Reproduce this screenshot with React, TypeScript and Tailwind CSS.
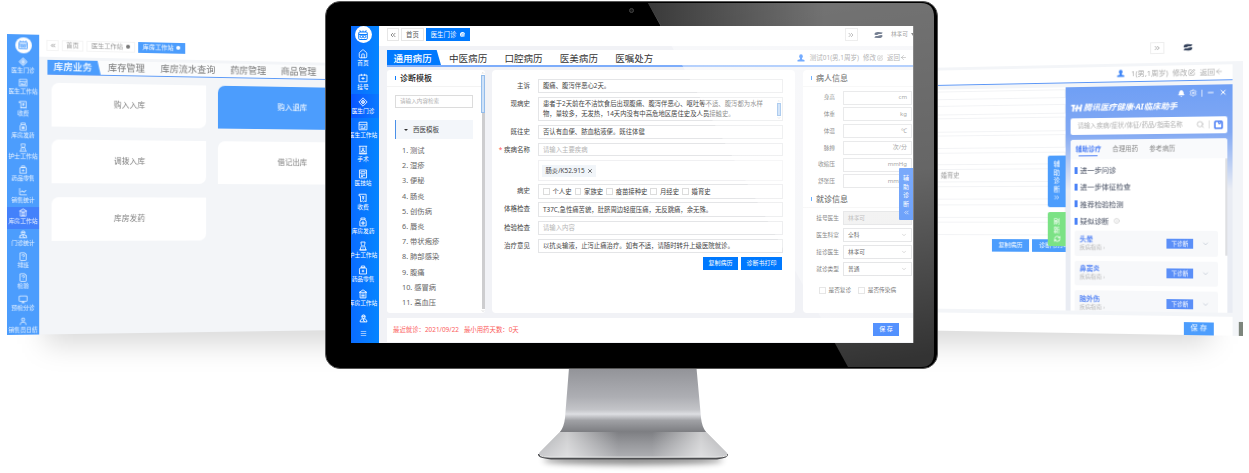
import React from "react";
import {
  ArrowLeft, BellIcon, ChevronDown, ChevronsLeft, ChevronsRight,
  ChevronUp, CircleX, FileQuestion, Home, Info,
  LineChart, Menu, Minus, Monitor, RefreshCw, Save, Search, Settings, SquarePen, User,
  X,
} from "lucide-react";

type Icon = React.ComponentType<{ className?: string; strokeWidth?: number }>;
type NavItem = { icon: Icon; label: string; active?: boolean };

const glyph = (children: React.ReactNode): Icon =>
  ({ className, strokeWidth = 2 }) => (
    <svg viewBox="0 0 24 24" className={className} fill="none" stroke="currentColor" strokeWidth={strokeWidth} strokeLinejoin="round">
      {children}
    </svg>
  );

const Robot = glyph(
  <>
    <path d="M8 6 5.500 2.500M16 6l2.500-3.500M12 6V3" />
    <rect x="3.500" y="6" width="17" height="15" rx="2" />
    <path d="M3.500 11h17" />
    <circle cx="9" cy="15" r="2.500" />
    <circle cx="15" cy="15" r="2.500" />
  </>,
);
const Register = glyph(<><rect x="2.500" y="5" width="19" height="16" /><path d="M8 2v5M16 2v5M8 13h8M12 9.500v7" /></>);
const DoubleDiamond = glyph(<><path d="M12 2 22 12 12 22 2 12Z" /><path d="M12 7 17 12 12 17 7 12Z" /><circle cx="12" cy="12" r="1.500" fill="currentColor" /></>);
const Workstation = glyph(<><rect x="2.500" y="3" width="19" height="18" /><path d="M2.500 9h19M6 14h6M6 17.500h12M15 12l3 2-3 2" /></>);
const Surgery = glyph(<><path d="M2 3h20M4.500 3v18h15V3M2 21h20" /><circle cx="12" cy="9" r="2" /><path d="M8 17v-2.500l4-2 4 2V17Z" /></>);
const Lab = glyph(<><rect x="3.500" y="2.500" width="17" height="19" /><path d="M7 6.500h10v5H7ZM7 15h10M7 18h5" /></>);
const Receipt = glyph(<><path d="M6 21V7H2.500V3h17v18l-3-2-3 2-3-2ZM10 7l2.500 3L15 7M12.500 10v6M10 12h5" /></>);
const Bottle = glyph(<><path d="M7 2.500h10v4H7ZM7 6.500 4.500 10v11.500h15V10L17 6.500" /><circle cx="12" cy="14.500" r="3" /><path d="M12 13v3M10.500 14.500h3" /></>);
const Nurse = glyph(<><path d="M7 2.500h10l-1 6a4 4 0 0 1-8 0ZM8 12 5 21.500h14L16 12M3 21.500h18M12 15v3" /></>);
const Kit = glyph(<><path d="M8 2.500h8v4H8ZM5 7h14l1.500 3v11.500h-17V10ZM12 11.500v6M9 14.500h6" /></>);
const House = glyph(<><path d="M12 2 3 8h18ZM5 8v13.500h14V8M8 12h8M8 15.500h8M8 19h8" /></>);
const Doctor = glyph(<><circle cx="12" cy="7" r="4.500" /><path d="M7.500 6h9M3 21c0-5 3-8 6-8h6c3 0 6 3 6 8ZM12 14v4l4 2" /></>);

const Swirl = ({ className }: { className?: string }) => (
  <svg viewBox="0 0 24 20" className={className} fill="currentColor">
    <path d="M1 8C2 3 7 1 12 2l11 1c-1 3-3 4.500-6 4.500-3 0-5-.5-6 1C7 10.500 2 11 1 8Z" />
    <path d="M23 12c-1 5-6 7-11 6L1 17c1-3 3-4.500 6-4.500 3 0 5 .5 6-1 4-2 9-2.500 10 .5Z" />
  </svg>
);

const PersonSolid = ({ className }: { className?: string }) => (
  <svg viewBox="0 0 16 16" className={className} fill="currentColor">
    <ellipse cx="8" cy="5" rx="3.600" ry="4.300" />
    <path d="M6 8h4v2.500l5 1.500v3H1v-3l5-1.500Z" />
  </svg>
);

const mainNav: NavItem[] = [
  { icon: Home, label: "首页" },
  { icon: Register, label: "挂号" },
  { icon: DoubleDiamond, label: "医生门诊", active: true },
  { icon: Workstation, label: "医生工作站" },
  { icon: Surgery, label: "手术" },
  { icon: Lab, label: "医技站" },
  { icon: Receipt, label: "收费" },
  { icon: Bottle, label: "库房发药" },
  { icon: Nurse, label: "护士工作站" },
  { icon: Kit, label: "药品零售" },
  { icon: House, label: "库房工作站" },
];

const stockNav: NavItem[] = [
  { icon: DoubleDiamond, label: "医生门诊" },
  { icon: Workstation, label: "医生工作站" },
  { icon: Receipt, label: "收费" },
  { icon: Bottle, label: "库房发药" },
  { icon: Nurse, label: "护士工作站" },
  { icon: Kit, label: "药品零售" },
  { icon: LineChart, label: "销售统计" },
  { icon: House, label: "库房工作站", active: true },
  { icon: Doctor, label: "门诊统计" },
  { icon: FileQuestion, label: "排班" },
  { icon: FileQuestion, label: "检验" },
  { icon: Monitor, label: "预检分诊" },
  { icon: User, label: "销售员日结" },
];

function StockWindow() {
  return (
    <div className="absolute left-[7px] top-[34px] flex h-[301px] w-[322px] origin-top-left overflow-hidden bg-[#f3f5f8] [transform:matrix3d(1.042,0.0247,0,0.000132,0,1,0,0,0,0,1,0,0,0,0,1)]">
      <nav className="flex w-[31px] shrink-0 flex-col items-center bg-[#4c9dfd] pt-[2.500px] text-white">
        <div className="flex size-[16px] shrink-0 items-center justify-center rounded-full bg-white">
          <Robot className="size-[11px] text-[#4c9dfd]" />
        </div>
        <div className="mt-[3px] flex w-full flex-col">
          {stockNav.map(({ icon: I, label, active }) => (
            <div key={label} className={`flex h-[21.700px] w-full flex-col items-center pt-px ${active ? "bg-[#4381fb]" : ""}`}>
              <I className="size-[9px] shrink-0 opacity-90" strokeWidth={2} />
              <span className="whitespace-nowrap text-[5.600px] leading-[8px] opacity-90">{label}</span>
            </div>
          ))}
        </div>
      </nav>
      <div className="flex min-w-0 flex-1 flex-col">
        <header className="flex h-[22px] shrink-0 items-center gap-[3px] bg-white pb-[2px] pl-[7px] text-[6.200px] text-[#999]">
          <span className="flex h-[11px] w-[12px] items-center justify-center border border-[#f4f4f4]"><ChevronsLeft className="size-[7px]" /></span>
          <span className="flex h-[11px] w-[21px] items-center justify-center border border-[#f4f4f4]">首页</span>
          <span className="flex h-[11px] w-[48px] items-center justify-center gap-[3px] whitespace-nowrap border border-[#f4f4f4]">医生工作站<i className="size-[4px] rounded-full bg-[#777]" /></span>
          <span className="flex h-[11px] w-[47px] items-center justify-center gap-[3px] whitespace-nowrap bg-[#4c9dfd] text-white">库房工作站<i className="size-[4px] rounded-full bg-white" /></span>
        </header>
        <div className="ml-[8px] mt-[3px] flex h-[15px] shrink-0 items-stretch border-b border-[#5f9cf8] bg-[#fbfcfd] text-[9.200px] leading-[14px] text-[#777]">
          <span className="w-[52px] bg-[#4c9dfd] pl-[6px] text-[9.400px] font-medium text-white [clip-path:polygon(0_0,94%_0,100%_100%,0_100%)]">库房业务</span>
          <span className="ml-[7px] whitespace-nowrap">库存管理</span>
          <span className="ml-[15.500px] whitespace-nowrap">库房流水查询</span>
          <span className="ml-[15px] whitespace-nowrap">药房管理</span>
          <span className="ml-[15px] whitespace-nowrap">商品管理</span>
        </div>
        <div className="ml-[12px] mt-[7.500px] grid grid-cols-[153px_153px] gap-x-[11.700px] gap-y-[13.600px] text-[7.700px] text-[#808080]">
          {["购入入库", "购入退库", "调拨入库", "借记出库", "库房发药"].map((name, i) => (
            <div key={name} className={`flex h-[44px] items-center justify-center rounded-br-[7px] rounded-tl-[7px] ${i === 1 ? "bg-[#4c9dfd] text-white" : "bg-white"}`}>{name}</div>
          ))}
        </div>
      </div>
    </div>
  );
}

function AssistantPanel() {
  return (
    <div className="flex h-[229px] w-[164px] shrink-0 flex-col bg-[linear-gradient(#6f9ff5_0,#82a9f3_48px,#e9ecf3_105px)] px-[5px]">
      <div className="mt-[3px] flex h-[11px] items-center justify-end gap-[4px] text-white">
        <BellIcon className="size-[7px] fill-white" />
        <Settings className="size-[8px]" />
        <i className="h-[7px] w-px bg-white/70" />
        <Minus className="size-[8px]" strokeWidth={3} />
        <X className="size-[8px]" strokeWidth={3} />
      </div>
      <div className="flex h-[15px] items-center gap-[1px] whitespace-nowrap text-[8.200px] font-bold italic text-white">
        <svg viewBox="0 0 26 20" className="h-[9px] w-[12px] shrink-0" stroke="white" strokeWidth="4" fill="none">
          <path d="M1 4h9M6.500 4 5 18M15 3l-3 15M24 2l-3 16M9 11l12-1.500" />
        </svg>
        腾讯医疗健康·AI临床助手
      </div>
      <div className="mt-[3px] flex h-[17px] shrink-0 items-center rounded-[2px] bg-white pl-[7px] pr-[4px] text-[6.300px] text-[#b0b0b0]">
        <span className="flex-1 whitespace-nowrap">请输入疾病/症状/体征/药品/指南名称</span>
        <Search className="size-[8px]" />
        <i className="mx-[4px] h-[8px] w-px bg-[#ddd]" />
        <svg viewBox="0 0 18 18" className="size-[9px] text-[#4a7df5]" fill="none" stroke="currentColor" strokeWidth="3">
          <rect x="2" y="2" width="14" height="14" rx="1.500" /><path d="M9.500 2v5h3V2" strokeWidth="2" />
        </svg>
      </div>
      <div className="mt-[5px] flex min-h-0 flex-1 flex-col overflow-hidden rounded-t-[3px] bg-white">
        <div className="flex h-[20px] shrink-0 items-center gap-[11px] bg-[#f9fafc] pl-[5px] text-[6.400px] text-[#888]">
          <span className="relative font-bold text-[#4a7df5]">辅助诊疗<i className="absolute bottom-[-3px] left-[3px] h-px w-[19px] bg-[#4a7df5]" /></span>
          <span>合理用药</span>
          <span>参考病历</span>
        </div>
        <div className="flex min-h-0 flex-1">
          <div className="flex flex-1 flex-col pl-[4px] pr-[7px] pt-[3px]">
            {["进一步问诊", "进一步体征检查", "推荐检验检测", "疑似诊断"].map((t, i) => (
              <div key={t} className="flex h-[17.400px] shrink-0 items-center gap-[3px] text-[7.200px] font-medium text-[#616878]">
                <i className="h-[7px] w-[2.500px] bg-[#4a82f7]" />
                {t}
                {i === 3 && <Info className="ml-[2px] size-[6px] text-[#bbb]" />}
              </div>
            ))}
            <div className="mt-px flex flex-col gap-[5px]">
              {["头晕", "鼻窦炎", "脑外伤"].map((t) => (
                <div key={t} className="flex h-[25.500px] shrink-0 items-center rounded-[2px] bg-[#f7f8fa] pl-[5px] pr-[8px]">
                  <div className="flex-1">
                    <div className="text-[6.800px] font-bold leading-[8px] text-[#5a88f5]">{t}</div>
                    <div className="text-[5.500px] leading-[8px] text-[#b5b5b5]">疾病指南 ›</div>
                  </div>
                  <span className="flex h-[10px] w-[26px] items-center justify-center bg-[#5b8ff8] text-[5.500px] text-white">下诊断</span>
                  <ChevronDown className="ml-[8px] size-[8px] text-[#a8b4c4]" strokeWidth={1.500} />
                </div>
              ))}
            </div>
          </div>
          <i className="h-[98px] w-[2px] rounded bg-[#dedfe2]" />
        </div>
      </div>
    </div>
  );
}

const clinicRows = [
  "mt-[2px] h-[9px]", "mt-[6px] h-[10px]", "mt-[3px] h-[15px]", "mt-[3px] h-[14px]",
  "mt-[4px] h-[13px]", "mt-[4px] h-[14px]", "mt-[4px] h-[14px]", "mt-[5px] h-[14px]", "mt-[4px] h-[14px]",
];

function ClinicWindow() {
  return (
    <div className="absolute left-[928px] top-[34px] flex h-[302px] w-[315px] origin-top-right flex-col overflow-hidden bg-[#f3f5f8] [transform:matrix3d(1.046,-0.027,0,-0.00015,0,1,0,0,0,0,1,0,0,0,0,1)]">
      <header className="flex h-[27px] shrink-0 items-start justify-end bg-white pr-[48px] pt-[6px]">
        <span className="mr-[18px] flex h-[12px] w-[14px] items-center justify-center border border-[#eee] text-[#888]"><ChevronsRight className="size-[8px]" /></span>
        <Swirl className="mt-[2px] h-[8px] w-[10px] text-[#35435c]" />
      </header>
      <div className="mr-[10px] mt-[3px] flex h-[15.500px] shrink-0 items-center justify-end gap-[4px] border-b-[1.500px] border-[#5c97f7] bg-white pr-[9px] text-[7.300px] text-[#aaa]">
        <PersonSolid className="mr-[2px] size-[8px] text-[#3f86f7]" />
        <span>1(男,1周岁)</span>
        <span className="flex items-center">修改<SquarePen className="ml-px size-[7px]" /></span>
        <span className="flex items-center">返回<ArrowLeft className="size-[8px]" /></span>
      </div>
      <div className="mt-[4px] flex h-[229px] shrink-0">
        <div className="flex flex-1 flex-col bg-white">
          {clinicRows.map((r, i) => (
            <div key={i} className={`shrink-0 border border-[#f2f3f5] pl-[12px] text-[6.500px] leading-[12px] text-[#999] ${r}`}>{i === 5 ? "婚育史" : ""}</div>
          ))}
          <div className="mt-[4px] flex shrink-0 justify-end gap-[3px] text-[6.200px] text-white">
            <span className="flex h-[13px] w-[38px] items-center justify-center bg-[#4c9dfd]">复制病历</span>
            <span className="flex h-[13px] w-[34px] items-center overflow-hidden whitespace-nowrap bg-[#4c9dfd] pl-[7px]">诊断书打印</span>
          </div>
        </div>
        <AssistantPanel />
        <i className="w-[10px]" />
      </div>
      <footer className="mr-[10px] mt-[4px] flex flex-1 items-start justify-end bg-white pr-[18px] pt-[6px]">
        <span className="flex h-[13px] w-[29px] items-center justify-center bg-[#4c9dfd] text-[7px] text-white">保 存</span>
      </footer>
      <div className="absolute right-[174px] top-[120px] flex w-[18px] flex-col gap-[5px] text-center text-[6.500px] leading-[8.600px] text-white">
        <div className="flex h-[53px] flex-col items-center rounded-l-[2px] bg-[#4c9dfd] pt-[5px]">
          <span className="w-[7px]">辅助诊断</span>
          <ChevronsRight className="size-[8px]" />
        </div>
        <div className="flex h-[35px] flex-col items-center rounded-l-[2px] bg-[#7be285] pt-[6px]">
          <span className="w-[7px]">刷新</span>
          <RefreshCw className="mt-px size-[7px]" strokeWidth={2.500} />
        </div>
      </div>
      <i className="absolute bottom-0 right-0 h-[14px] w-[4px] bg-[#7d857c]" />
    </div>
  );
}

function MainNav() {
  return (
    <nav className="flex w-[28px] shrink-0 flex-col overflow-hidden bg-[linear-gradient(90deg,#0a6cff,#0585ff)] text-white">
      <div className="ml-[3.500px] flex size-[17px] shrink-0 items-center justify-center rounded-full bg-white">
        <Robot className="size-[12px] text-[#0a7cff]" />
      </div>
      <div className="mt-[3px] flex flex-col">
        {mainNav.map(({ icon: I, label, active }) => (
          <div key={label} className={`flex h-[24.050px] justify-start ${active ? "bg-[linear-gradient(90deg,#0a55ff,#0a7aff)]" : ""}`}>
            <div className="flex w-[24px] flex-col items-center pt-[3px]">
              <I className="size-[10px] shrink-0" strokeWidth={2} />
              <span className="whitespace-nowrap text-[5.700px] leading-[9px]">{label}</span>
            </div>
          </div>
        ))}
        <div className="flex w-[24px] flex-col items-center gap-[7px] pt-[3px]">
          <Doctor className="size-[9px]" strokeWidth={2.500} />
          <Menu className="size-[7px]" />
        </div>
      </div>
    </nav>
  );
}

const Heading = ({ children }: { children: React.ReactNode }) => (
  <div className="flex items-center gap-[4px] text-[8px] font-medium leading-[12px] text-[#222]">
    <i className="h-[4px] w-px bg-[#0a7cff]" />
    {children}
  </div>
);

function TemplatePanel() {
  const items = ["测试", "湿疹", "便秘", "肠炎", "创伤病", "唇炎", "带状疱疹", "肺部感染", "腹痛", "感冒病", "高血压"];
  return (
    <section className="flex w-[98px] shrink-0 overflow-hidden rounded-[3px] bg-white">
      <div className="flex flex-1 flex-col">
        <div className="flex h-[17px] items-center border-b border-[#f3f3f3] pl-[8px]"><Heading>诊断模板</Heading></div>
        <div className="ml-[8px] mt-[8px] flex h-[13px] w-[78px] shrink-0 items-center border border-[#dcdcdc] pl-[4px] text-[5.600px] text-[#b0b0b0]">请输入内容检索</div>
        <div className="ml-[8px] mt-[12px] flex h-[19px] w-[78px] shrink-0 items-center border-l border-[#4a90e8] bg-[#f3f6fa] pl-[8px] text-[6.500px] text-[#444]">
          <i className="mr-[5px] border-x-[2px] border-t-[2.500px] border-x-transparent border-t-[#333]" />西医模板
        </div>
        <ol className="ml-[15px] mt-[4px] text-[7.300px] leading-[15.200px] text-[#666]">
          {items.map((t, i) => <li key={t} className="whitespace-nowrap">{i + 1}. {t}</li>)}
        </ol>
      </div>
      <div className="flex w-[4px] flex-col items-center pt-px text-[#999]">
        <ChevronUp className="size-[4px] shrink-0" />
        <i className="h-[38px] w-[3.500px] border border-[#94bdeb] bg-[#cfe2f8]" />
        <i className="w-[3px] flex-1 bg-[#cdcdcf]" />
        <ChevronDown className="size-[4px] shrink-0" />
      </div>
    </section>
  );
}

function Field({ label, required, size, children }: { label?: string; required?: boolean; size: string; children?: React.ReactNode }) {
  return (
    <div className={`flex shrink-0 ${size}`}>
      <div className="w-[38px] whitespace-nowrap text-right text-[6.500px] leading-[13px] text-[#444]">
        {required && <span className="text-[#f55]">* </span>}{label}
      </div>
      <div className="ml-[8px] flex w-[245px] items-center border border-[#e4e5e7] pl-[4px] text-[6.370px] text-[#444]">{children}</div>
    </div>
  );
}

const Check = ({ children }: { children: React.ReactNode }) => (
  <span className="flex items-center gap-[3px] whitespace-nowrap"><i className="size-[6.500px] border border-[#dcdcdc]" />{children}</span>
);

function RecordPanel() {
  return (
    <section className="flex w-[303px] shrink-0 flex-col rounded-[4px] bg-white pt-[9px]">
      <Field label="主诉" size="h-[14px]">腹痛、腹泻伴恶心2天。</Field>
      <Field label="现病史" size="mt-[4px] h-[24px]">
        <p className="flex-1 whitespace-nowrap leading-[10px]">
          患者于2天前在不洁饮食后出现腹痛、腹泻伴恶心、呕吐等不适、腹泻都为水样<br />
          物，量较多，无发热，14天内没有中高危地区居住史及人员接触史。
        </p>
        <div className="mr-px flex flex-col items-center text-[#999]">
          <ChevronUp className="size-[4px]" />
          <i className="h-[13px] w-[3.500px] border border-[#74a8e4] bg-[#b4d2f5]" />
          <ChevronDown className="size-[4px]" />
        </div>
      </Field>
      <Field label="既往史" size="mt-[4px] h-[14px]">否认有血便、脓血粘液便。既往体健</Field>
      <Field label="疾病名称" required size="mt-[4px] h-[13px]"><span className="text-[#b5b5b5]">请输入主要疾病</span></Field>
      <div className="ml-[46px] mt-[4px] flex h-[21px] w-[245px] shrink-0 items-center border border-[#f0f0f2] pl-[3px]">
        <span className="flex h-[12px] w-[54px] items-center justify-center gap-[2px] whitespace-nowrap bg-[#f1f5f9] text-[6.400px] text-[#444]">肠炎/K52.915<X className="size-[6px]" strokeWidth={3} /></span>
      </div>
      <Field label="病史" size="mt-[3px] h-[15px]">
        <div className="flex gap-[3px] text-[6.370px]">
          {["个人史", "家族史", "疫苗接种史", "月经史", "婚育史"].map((t) => <Check key={t}>{t}</Check>)}
        </div>
      </Field>
      <Field label="体格检查" size="mt-[3px] h-[15px]">T37C,急性痛苦貌，肚脐周边轻度压痛，无反跳痛，余无殊。</Field>
      <Field label="检验检查" size="mt-[4px] h-[14px]"><span className="text-[#b5b5b5]">请输入内容</span></Field>
      <Field label="治疗意见" size="mt-[4px] h-[14px]">以抗炎输液，止泻止痛治疗。如有不适，请随时转升上级医院就诊。</Field>
      <div className="mr-[13px] mt-[4px] flex justify-end gap-[3px] text-[6px] text-white">
        <span className="flex h-[13px] w-[35px] items-center justify-center bg-[#0079fe]">复制病历</span>
        <span className="flex h-[13px] w-[41px] items-center justify-center bg-[#0079fe]">诊断书打印</span>
      </div>
    </section>
  );
}

function InfoPanel() {
  const vitals = [["身高", "cm"], ["体重", "kg"], ["体温", "℃"], ["脉搏", "次/分"], ["收缩压", "mmHg"], ["舒张压", "mmHg"]];
  const visit = [["挂号医生", "林孝可"], ["医生科室", "全科"], ["接诊医生", "林孝可"], ["就诊类型", "普通"]];
  return (
    <section className="flex w-[110px] shrink-0 flex-col rounded-l-[4px] bg-white text-[5.700px] text-[#444]">
      <div className="flex h-[17px] items-center border-b border-[#f3f3f3] pl-[8px]"><Heading>病人信息</Heading></div>
      <div className="mt-[3.500px] flex flex-col gap-[2.800px]">
        {vitals.map(([l, u]) => (
          <div key={l} className="flex h-[14px] items-center">
            <span className="w-[32px] text-right">{l}</span>
            <span className="ml-[8px] flex h-[14px] w-[69px] items-center justify-end border border-[#dadbdd] pr-[4px] text-[6px] text-[#666]">{u}</span>
          </div>
        ))}
      </div>
      <div className="mt-[3px] flex h-[17px] items-center border-b border-[#f3f3f3] pl-[8px]"><Heading>就诊信息</Heading></div>
      <div className="mt-[3px] flex flex-col gap-[2.900px]">
        {visit.map(([l, v], i) => (
          <div key={l} className="flex h-[14px] items-center">
            <span className="w-[36px] text-right">{l}</span>
            <span className={`ml-[4px] flex h-[14px] w-[69px] items-center justify-between border border-[#dadbdd] px-[4px] ${i === 0 ? "bg-[#ececec] text-[#999]" : "text-[#222]"}`}>
              {v}{i > 0 && <ChevronDown className="size-[6px] text-[#999]" />}
            </span>
          </div>
        ))}
      </div>
      <div className="ml-[16px] mt-[10px] flex gap-[7px]"><Check>是否复诊</Check><Check>是否传染病</Check></div>
    </section>
  );
}

function MainScreen() {
  return (
    <div className="absolute left-[351px] top-[26px] flex h-[317px] w-[562px] overflow-hidden bg-[#f1f2f6]">
      <MainNav />
      <div className="flex min-w-0 flex-1 flex-col">
        <header className="flex h-[20px] shrink-0 items-center gap-[2px] bg-white pl-[8px] text-[6.400px] text-[#555]">
          <span className="-mt-[3px] flex h-[13px] w-[12px] items-center justify-center border border-[#e6e6e6]"><ChevronsLeft className="size-[8px]" /></span>
          <span className="-mt-[3px] flex h-[13px] w-[23px] items-center justify-center border border-[#e6e6e6]">首页</span>
          <span className="-mt-[3px] flex h-[13px] w-[44px] items-center justify-center gap-[4px] bg-[#0079fe] text-white">医生门诊<i className="flex size-[5px] items-center justify-center rounded-full bg-white"><CircleX className="size-[4px] text-[#0079fe]" /></i></span>
          <span className="-mt-[3px] ml-auto mr-[14px] flex h-[13px] w-[13px] items-center justify-center border border-[#e0e0e0]"><ChevronsRight className="size-[8px]" /></span>
          <Swirl className="-mt-[2px] mr-[6px] h-[8px] w-[9px] text-[#0b1d3d]" />
          <span className="-mt-[3px] -mr-[2px] flex items-center whitespace-nowrap text-[5.700px]">林孝可<i className="ml-[3px] border-x-[2px] border-t-[3px] border-x-transparent border-t-[#333]" /></span>
        </header>
        <div className="ml-[8px] mt-[4px] flex h-[17px] shrink-0 border-b-2 border-[#7dadfb] bg-white text-[9.550px] leading-[17px] text-[#333]">
          <span className="w-[54px] bg-[#0079fe] pl-[6.500px] font-medium text-white [clip-path:polygon(0_0,92%_0,100%_100%,0_100%)]">通用病历</span>
          <div className="ml-[8px] flex gap-[17.200px] whitespace-nowrap">
            {["中医病历", "口腔病历", "医美病历", "医嘱处方"].map((t) => <span key={t}>{t}</span>)}
          </div>
          <div className="ml-auto mr-[6px] flex items-center gap-[4px] text-[6.500px] text-[#777]">
            <PersonSolid className="mr-px size-[8px] text-[#0a6cff]" />
            <span>测试01(男,1周岁)</span>
            <span className="flex items-center">修改<SquarePen className="ml-px size-[6px]" /></span>
            <span className="flex items-center">返回<ArrowLeft className="size-[7px]" /></span>
          </div>
        </div>
        <div className="ml-[8px] mt-[3px] flex h-[243px] shrink-0 gap-[7px]">
          <TemplatePanel />
          <RecordPanel />
          <i className="-mr-[6px] w-0" />
          <InfoPanel />
        </div>
        <footer className="mb-px ml-[8px] mt-[4.500px] flex flex-1 items-center justify-between bg-white pl-[6px] pr-[14px] text-[6.400px] text-[#fb5c5c]">
          <span className="whitespace-pre">最近就诊：2021/09/22   最小用药天数：0天</span>
          <span className="flex h-[13px] w-[26px] items-center justify-center bg-[#1f70fe] text-[6px] text-white">保 存</span>
        </footer>
      </div>
      <div className="absolute right-0 top-[142px] flex h-[52px] w-[14px] flex-col items-center rounded-l-[1px] bg-[#2070f8] pt-[6px] text-center text-[6px] leading-[8.500px] text-white">
        <span className="w-[6px]">辅助诊断</span>
        <ChevronsLeft className="mt-px size-[7px]" />
      </div>
    </div>
  );
}

function Stand() {
  return (
    <svg viewBox="0 0 210 108" className="absolute left-[527px] top-[365px] h-[108px] w-[210px]">
      <defs>
        <linearGradient id="neck" x1="0" y1="0" x2="0" y2="1">
          <stop offset="0" stopColor="#929398" />
          <stop offset=".45" stopColor="#adaeb3" />
          <stop offset=".65" stopColor="#c3c4c8" />
          <stop offset=".72" stopColor="#dddee2" />
          <stop offset=".82" stopColor="#a0a1a5" />
          <stop offset="1" stopColor="#7c7d81" />
        </linearGradient>
        <linearGradient id="foot" x1="0" y1="0" x2="0" y2="1">
          <stop offset="0" stopColor="#7c7d81" />
          <stop offset=".5" stopColor="#97989c" />
          <stop offset="1" stopColor="#aeafb3" />
        </linearGradient>
        <linearGradient id="sheen" x1="0" y1="0" x2="1" y2="0">
          <stop offset="0" stopColor="#fff" stopOpacity=".35" />
          <stop offset=".15" stopColor="#fff" stopOpacity=".6" />
          <stop offset=".42" stopColor="#fff" stopOpacity="0" />
          <stop offset=".6" stopColor="#fff" stopOpacity="0" />
          <stop offset=".86" stopColor="#fff" stopOpacity=".6" />
          <stop offset="1" stopColor="#fff" stopOpacity=".35" />
        </linearGradient>
        <filter id="soft" x="-20%" y="-100%" width="140%" height="300%"><feGaussianBlur stdDeviation="3" /></filter>
      </defs>
      <ellipse cx="106" cy="95" rx="90" ry="5" fill="#000" opacity=".45" filter="url(#soft)" />
      <path d="M11 89 Q10 93 24 94.500 H190 Q202 93 201 89Z" fill="#4c4d50" />
      <path d="M34 66 L13 87 Q9 91 21 92 H191 Q204 91 199 87 L178 66Z" fill="url(#foot)" />
      <path d="M34 66 L13 87 Q9 91 21 92 H191 Q204 91 199 87 L178 66Z" fill="url(#sheen)" />
      <path d="M13 90.500 Q15 92 23 92.200 H189 Q197 92 200 90.500" fill="none" stroke="#eee" strokeWidth="1" />
      <path d="M42 3 H169.500 L174 53 Q175 62 179 67 H33 Q37 62 38 53Z" fill="url(#neck)" />
    </svg>
  );
}

function Gloss() {
  return (
    <svg viewBox="0 0 613 366" className="absolute left-[325px] top-[2px] h-[366px] w-[613px]">
      <defs>
        <linearGradient id="gloss" gradientUnits="userSpaceOnUse" x1="470" y1="0" x2="530" y2="366">
          <stop offset="0" stopColor="#fff" stopOpacity=".45" />
          <stop offset=".5" stopColor="#fff" stopOpacity=".4" />
          <stop offset="1" stopColor="#fff" stopOpacity=".2" />
        </linearGradient>
        <linearGradient id="edge" x1="0" y1="0" x2="1" y2="0">
          <stop offset="0" stopColor="#000" stopOpacity=".5" />
          <stop offset="1" stopColor="#000" stopOpacity="0" />
        </linearGradient>
      </defs>
      <path d="M323 1 H596 Q609 1 609 15 V351 Q609 365 596 365 H523Z" fill="url(#gloss)" />
      <path d="M323 1 H500 V24 H336Z" fill="url(#edge)" />
      <path d="M588.500 24V341" stroke="#999" strokeOpacity=".6" />
    </svg>
  );
}

export default function App() {
  return (
    <main className="relative h-[473px] w-[1249px] overflow-hidden bg-white [font-family:'Noto_Sans','Noto_Sans_CJK_SC',sans-serif]">
      <div className="absolute left-[45px] top-[250px] h-[94px] w-[360px] bg-black/15 blur-[14px]" />
      <div className="absolute left-[870px] top-[250px] h-[94px] w-[340px] bg-black/15 blur-[14px]" />
      <StockWindow />
      <ClinicWindow />
      <Stand />
      <div className="absolute left-[325px] top-[1px] h-[368px] w-[613px] rounded-[15px] border border-[#555] bg-black" />
      <i className="absolute left-[629px] top-[8px] size-[5px] rounded-full border border-[#444] bg-[#181818]" />
      <MainScreen />
      <Gloss />
    </main>
  );
}
